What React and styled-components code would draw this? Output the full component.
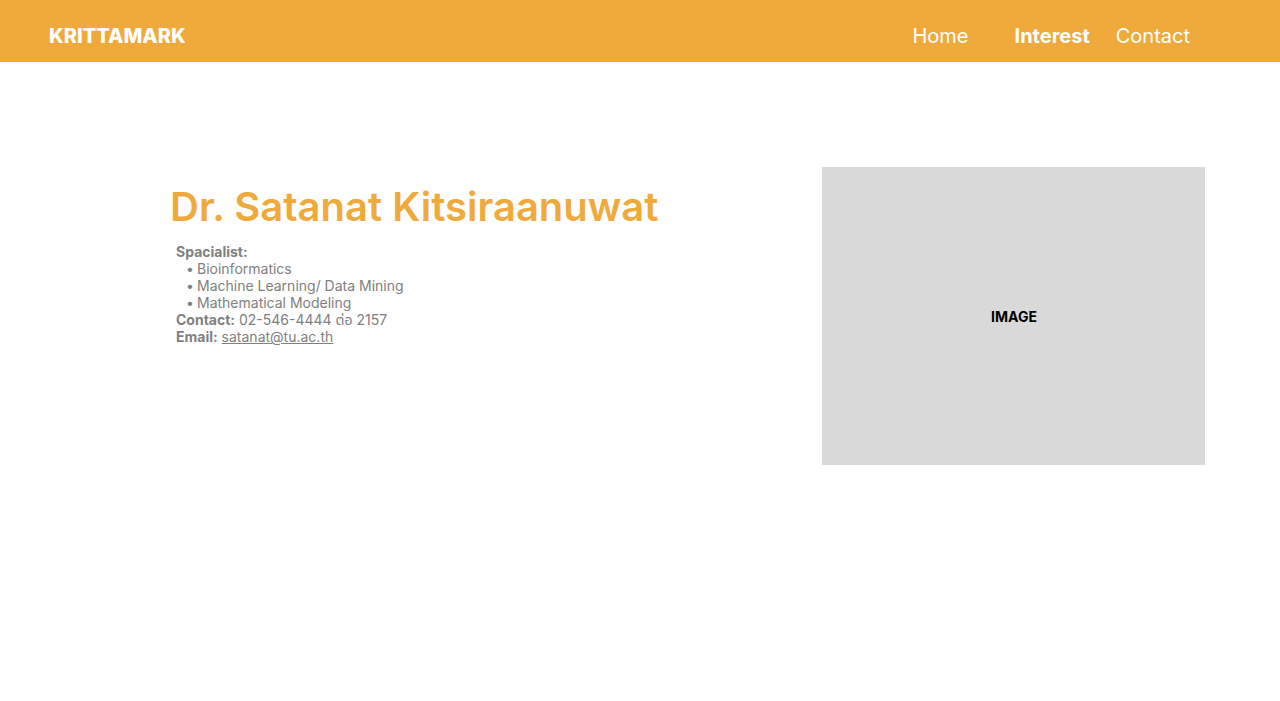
import React from "react";
import styled, { createGlobalStyle } from "styled-components";

const GlobalStyle = createGlobalStyle`
  body {
    margin: 0;
    font-family: Inter, "Noto Sans", "Noto Sans Thai", sans-serif;
    background: #ffffff;
  }
`;

const Header = styled.header`
  height: 62px;
  box-sizing: border-box;
  background: #f0aa3c;
  display: flex;
  align-items: center;
  justify-content: space-between;
  padding: 10px 90px 0 49px;
  color: #ffffff;
`;

const Logo = styled.div`
  font-size: 20px;
  font-weight: 800;
`;

const Nav = styled.nav`
  display: flex;
  align-items: center;
`;

const NavLink = styled.a`
  font-size: 20px;
  font-weight: ${(p) => (p.$active ? 700 : 400)};
  color: #ffffff;
  text-decoration: none;
  margin-right: ${(p) => p.$gap || 0}px;
  cursor: pointer;
`;

const Main = styled.main`
  display: flex;
  justify-content: space-between;
  align-items: flex-start;
  padding: 105px 75px 0 170px;
`;

const Info = styled.section`
  display: flex;
  flex-direction: column;
  padding-top: 16px;
`;

const Name = styled.h1`
  margin: 0;
  font-size: 40px;
  font-weight: 600;
  color: #f0aa3c;
  line-height: 48px;
`;

const Details = styled.div`
  margin: 12px 0 0 6px;
  font-size: 14px;
  line-height: 17px;
  color: #808080;
`;

const Label = styled.span`
  font-weight: 700;
`;

const List = styled.ul`
  margin: 0;
  padding-left: 10px;
  list-style: none;
`;

const Item = styled.li`
  &::before {
    content: "•";
    display: inline-block;
    width: 11px;
  }
`;

const Mail = styled.a`
  color: #808080;
  text-decoration: underline;
`;

const ImageBox = styled.div`
  width: 383px;
  height: 298px;
  background: #d9d9d9;
  display: flex;
  align-items: center;
  justify-content: center;
  font-size: 14px;
  font-weight: 700;
  color: #000000;
  padding-left: 1px;
  box-sizing: border-box;
`;

export default function App() {
  return (
    <>
      <GlobalStyle />
      <Header>
        <Logo>KRITTAMARK</Logo>
        <Nav>
          <NavLink $gap={46}>Home</NavLink>
          <NavLink $gap={26} $active>
            Interest
          </NavLink>
          <NavLink>Contact</NavLink>
        </Nav>
      </Header>
      <Main>
        <Info>
          <Name>Dr. Satanat Kitsiraanuwat</Name>
          <Details>
            <Label>Spacialist:</Label>
            <List>
              {["Bioinformatics", "Machine Learning/ Data Mining", "Mathematical Modeling"].map((x) => (
                <Item key={x}>{x}</Item>
              ))}
            </List>
            <div>
              <Label>Contact:</Label> 02-546-4444 ต่อ 2157
            </div>
            <div>
              <Label>Email:</Label> <Mail href="mailto:satanat@tu.ac.th">satanat@tu.ac.th</Mail>
            </div>
          </Details>
        </Info>
        <ImageBox>IMAGE</ImageBox>
      </Main>
    </>
  );
}
